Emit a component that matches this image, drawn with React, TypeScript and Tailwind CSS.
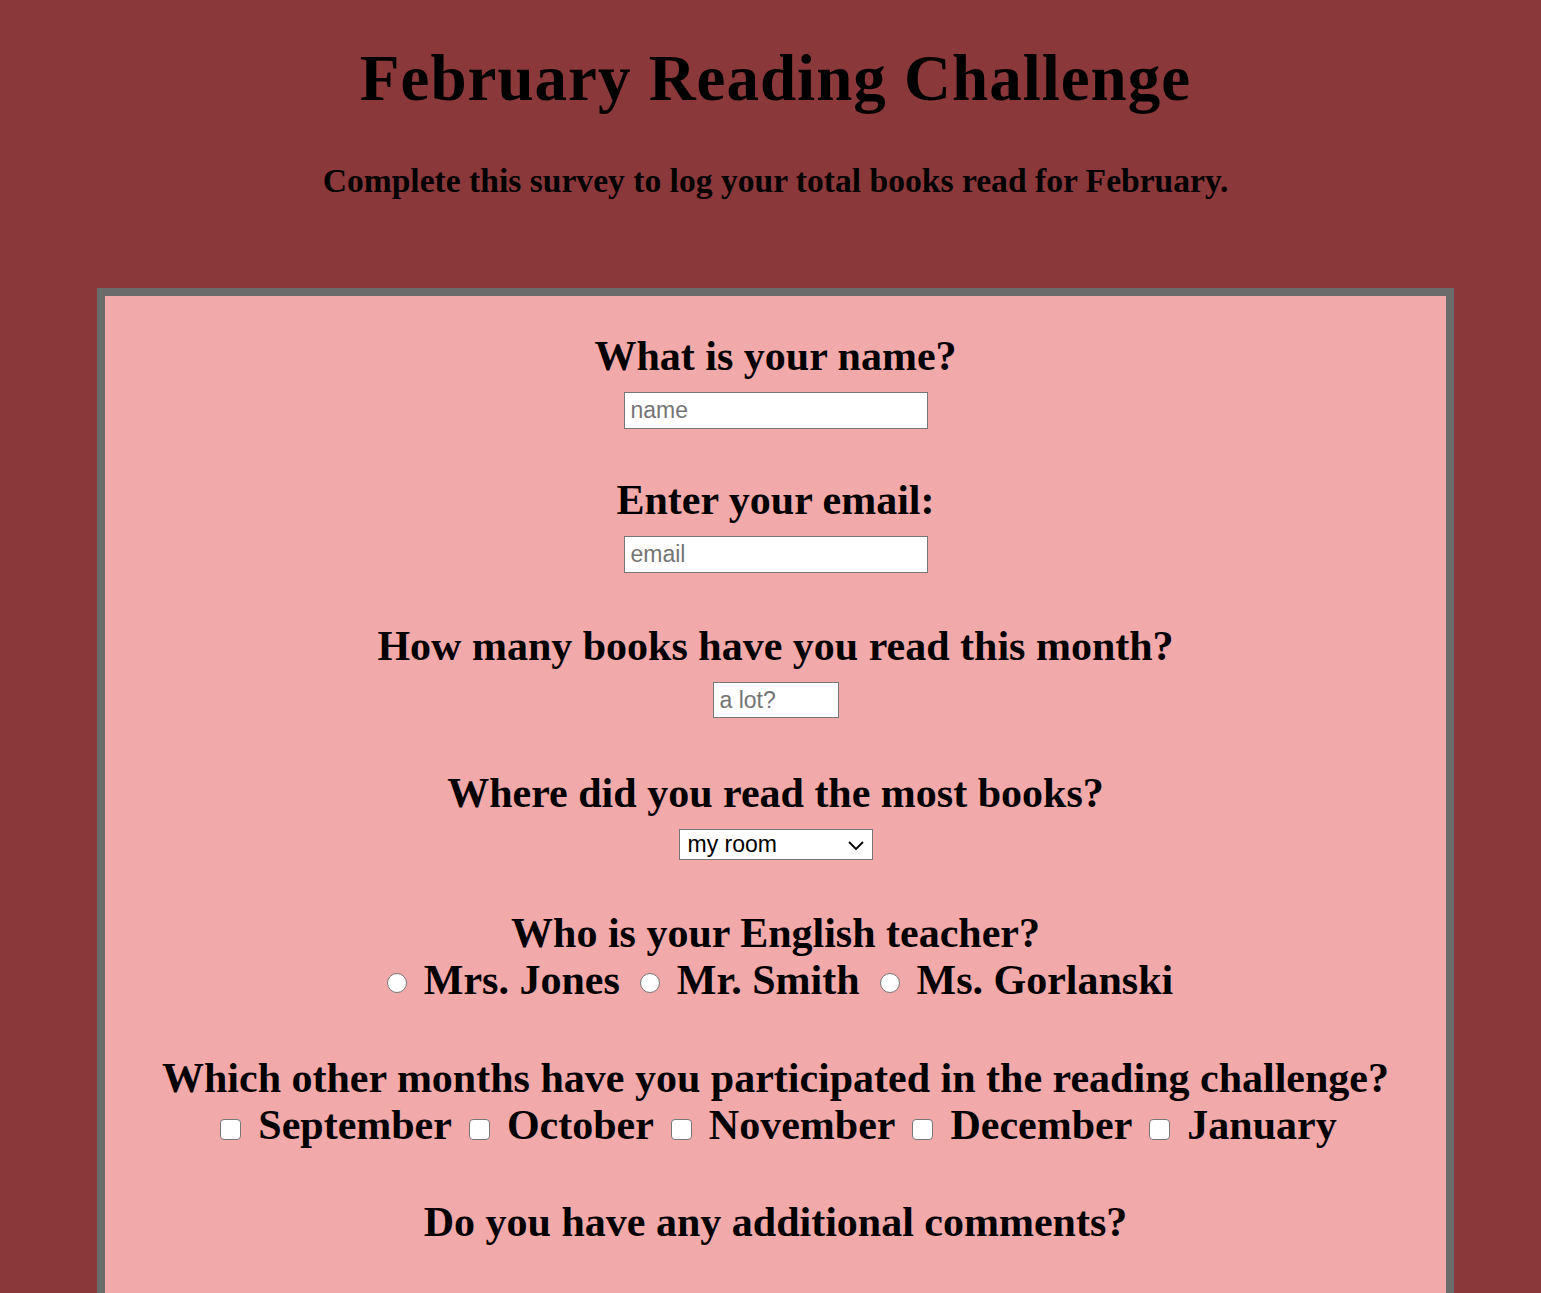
import { useState } from 'react'

const teachers = ['Mrs. Jones', 'Mr. Smith', 'Ms. Gorlanski']
const months = ['September', 'October', 'November', 'December', 'January']

function Question({ children }: { children: React.ReactNode }) {
  return <h2 className="text-[42px] leading-[48px] font-bold">{children}</h2>
}

const field =
  "bg-white border border-[#767676] px-[6px] text-[23px] font-['Liberation_Sans',sans-serif] placeholder:text-[#757575] outline-none"

export default function App() {
  const [teacher, setTeacher] = useState('')

  return (
    <div className="min-h-screen bg-[#8b383b] text-black font-['Liberation_Serif',serif]">
      <header className="flex flex-col items-center pt-[41px] pl-[10px]">
        <h1 className="text-[65px] leading-[75px] tracking-[1px] font-bold">February Reading Challenge</h1>
        <p className="mt-[45px] text-[33.6px] leading-[40px] font-bold">
          Complete this survey to log your total books read for February.
        </p>
      </header>

      <form className="ml-[97px] mt-[87px] w-[1357px] border-[8px] border-[#6b6b6b] bg-[#f2a9aa] pt-[36px] pb-[60px] flex flex-col items-center text-center">
        <Question>What is your name?</Question>
        <input type="text" placeholder="name" className={`mt-[12px] w-[304px] h-[37px] ${field}`} />

        <div className="mt-[47px]">
          <Question>Enter your email:</Question>
        </div>
        <input type="email" placeholder="email" className={`mt-[12px] w-[304px] h-[37px] ${field}`} />

        <div className="mt-[49px]">
          <Question>How many books have you read this month?</Question>
        </div>
        <input type="number" placeholder="a lot?" className={`mt-[12px] w-[126px] h-[36px] ${field}`} />

        <div className="mt-[51px]">
          <Question>Where did you read the most books?</Question>
        </div>
        <div className="relative mt-[12px]">
          <select className="appearance-none w-[194px] h-[31px] bg-white border border-[#767676] pl-[8px] text-[23px] leading-[29px] font-['Liberation_Sans',sans-serif] text-left outline-none">
            <option>my room</option>
            <option>the library</option>
            <option>school</option>
          </select>
          <svg
            className="pointer-events-none absolute right-[9px] top-[12px]"
            width="16"
            height="9"
            viewBox="0 0 16 9"
            fill="none"
            stroke="black"
            strokeWidth="1.8"
          >
            <path d="M1 1l7 7 7-7" />
          </svg>
        </div>

        <div className="mt-[49px]">
          <Question>Who is your English teacher?</Question>
        </div>
        <div className="flex items-start gap-[20px] pl-[9px] text-[42px] leading-[47px] font-bold">
          {teachers.map((t) => (
            <label key={t} className="flex items-start gap-[17px]">
              <input
                type="radio"
                name="teacher"
                checked={teacher === t}
                onChange={() => setTeacher(t)}
                className="appearance-none w-[20px] h-[20px] m-0 mt-[16px] rounded-full bg-white border border-[#767676] checked:border-[6px] checked:border-[#0075ff]"
              />
              <span>{t}</span>
            </label>
          ))}
        </div>

        <div className="mt-[50px]">
          <Question>Which other months have you participated in the reading challenge?</Question>
        </div>
        <div className="flex items-start gap-[17px] pl-[6px] text-[42px] leading-[47px] font-bold">
          {months.map((m) => (
            <label key={m} className="flex items-start gap-[17px]">
              <input
                type="checkbox"
                className="appearance-none w-[21px] h-[21px] m-0 mt-[17px] rounded-[4px] bg-white border border-[#767676] checked:bg-[#0075ff]"
              />
              <span>{m}</span>
            </label>
          ))}
        </div>

        <div className="mt-[49px]">
          <Question>Do you have any additional comments?</Question>
        </div>
        <textarea className="mt-[60px] w-[500px] h-[120px] bg-white border border-[#767676]" />
      </form>
    </div>
  )
}
